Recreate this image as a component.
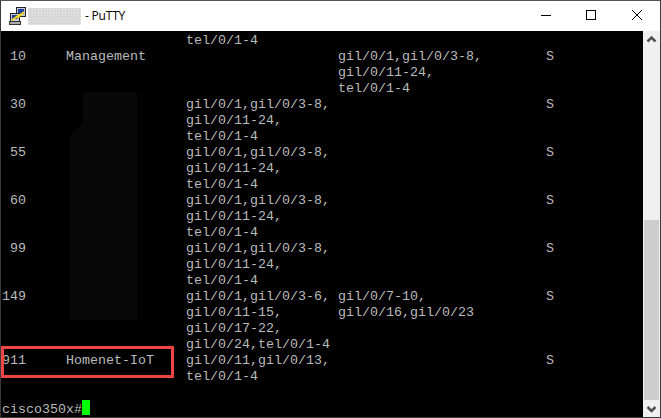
<script>
  const gil = 'gil/0/1,gil/0/3-8,';
  const mid = 'gil/0/11-24,';
  const tel = 'tel/0/1-4';

  // col: vlan, name, ports, forbidden, flag
  const pad = (s, n) => s.padEnd(n, ' ');
  const row = (vlan = '', name = '', ports = '', forbidden = '', flag = '') =>
    pad(pad(pad(pad(vlan, 8) + name, 23) + ports, 42) + forbidden, 68) + flag;

  const vlanRows = ['30', '55', '60', '99'].flatMap((id) => [
    row(' ' + id, '', gil, '', 'S'),
    row('', '', mid),
    row('', '', tel)
  ]);

  const lines = [
    row('', '', tel),
    row(' 10', 'Management', '', gil, 'S'),
    row('', '', '', mid),
    row('', '', '', tel),
    ...vlanRows,
    row('149', '', 'gil/0/1,gil/0/3-6,', 'gil/0/7-10,', 'S'),
    row('', '', 'gil/0/11-15,', 'gil/0/16,gil/0/23'),
    row('', '', 'gil/0/17-22,'),
    row('', '', 'gil/0/24,tel/0/1-4'),
    row('911', 'Homenet-IoT', 'gil/0/11,gil/0/13,', '', 'S'),
    row('', '', tel),
    ''
  ];
</script>

<div class="window">
  <header class="titlebar">
    <svg class="app-icon" width="18" height="18" viewBox="0 0 18 18">
      <rect x="7.5" y="0.5" width="9" height="9" fill="#c8c8d8" stroke="#222" />
      <rect x="9" y="2" width="6" height="5" fill="#1a3fa0" />
      <rect x="1.5" y="6.5" width="9" height="8" fill="#c8c8d8" stroke="#222" />
      <rect x="3" y="8" width="6" height="4" fill="#1a3fa0" />
      <path d="M3 13 L9 9 L8 11 L15 5" fill="none" stroke="#f4d820" stroke-width="2" />
      <rect x="0.5" y="14.5" width="11" height="3" fill="#aaa" stroke="#333" />
    </svg>
    <span class="blurred-host"></span>
    <span class="title">- PuTTY</span>
    <div class="controls">
      <svg width="46" height="30" viewBox="0 0 46 30"><path d="M19 14.5h10" stroke="#000" /></svg>
      <svg width="46" height="30" viewBox="0 0 46 30"><rect x="18.5" y="9.5" width="9" height="9" fill="none" stroke="#000" /></svg>
      <svg width="46" height="30" viewBox="0 0 46 30"><path d="M18 9l10 10M28 9l-10 10" stroke="#000" /></svg>
    </div>
  </header>

  <div class="body">
    <div class="term">
      <pre class="output">{lines.join('\n')}</pre>
      <div class="prompt"><span class="prompt-text">cisco350x#</span><span class="cursor"></span></div>
      <div class="smudge"></div>
      <div class="highlight"></div>
    </div>
    <div class="scrollbar">
      <svg width="17" height="17" viewBox="0 0 17 17"><path d="M4.5 10.5l4-4 4 4" fill="none" stroke="#505050" stroke-width="2.5" /></svg>
      <div class="track"><div class="thumb"></div></div>
      <svg width="17" height="17" viewBox="0 0 17 17"><path d="M4.5 7l4 4 4-4" fill="none" stroke="#505050" stroke-width="2.5" /></svg>
    </div>
  </div>
</div>

<style>
  :global(body) {
    margin: 0;
    background: #fff;
  }
  .window {
    width: 661px;
    height: 418px;
    display: flex;
    flex-direction: column;
    box-sizing: border-box;
    border: 1px solid #3a3a3a;
    border-top-color: #555;
    overflow: hidden;
  }
  .titlebar {
    height: 30px;
    flex: none;
    display: flex;
    align-items: center;
    background: #fff;
    font-family: "Open Sans", "Noto Sans", sans-serif;
    font-size: 12px;
    color: #000;
  }
  .app-icon {
    margin-left: 8px;
    flex: none;
  }
  .blurred-host {
    width: 53px;
    height: 17px;
    margin-left: 1px;
    background-color: #d8d8d8;
    background-image: radial-gradient(circle, #ececec 0.8px, transparent 1px);
    background-size: 3px 3px;
  }
  .title {
    margin-left: 4px;
    margin-bottom: 1px;
    letter-spacing: -0.2px;
  }
  .controls {
    margin-left: auto;
    display: flex;
  }
  .body {
    flex: 1;
    display: flex;
    min-height: 0;
  }
  .term {
    flex: 1;
    background: #000;
    padding-left: 1px;
    position: relative;
    overflow: hidden;
    font-family: "Liberation Mono", monospace;
    font-size: 13.33px;
    line-height: 16px;
    color: #bbb;
  }
  .output {
    margin: 0;
    font: inherit;
    box-sizing: border-box;
    padding-top: 2px;
    height: 369px;
  }
  .prompt {
    display: flex;
    height: 16px;
  }
  .prompt-text {
    margin-top: 2px;
  }
  .cursor {
    width: 8px;
    height: 15px;
    background: #00ff00;
  }
  .smudge {
    position: absolute;
    left: 69px;
    top: 61px;
    width: 67px;
    height: 228px;
    background: #080808;
    clip-path: polygon(13px 0, 100% 0, 100% 100%, 0 100%, 0 44px, 13px 30px);
  }
  .highlight {
    position: absolute;
    left: 0;
    top: 315px;
    width: 173px;
    height: 32px;
    box-sizing: border-box;
    border: 3px solid #ee4444;
  }
  .scrollbar {
    width: 17px;
    flex: none;
    display: flex;
    flex-direction: column;
    background: #f0f0f0;
  }
  .track {
    flex: 1;
    display: flex;
    flex-direction: column;
    justify-content: flex-end;
    padding: 0 1px;
  }
  .thumb {
    height: 180px;
    background: #cdcdcd;
  }
</style>
